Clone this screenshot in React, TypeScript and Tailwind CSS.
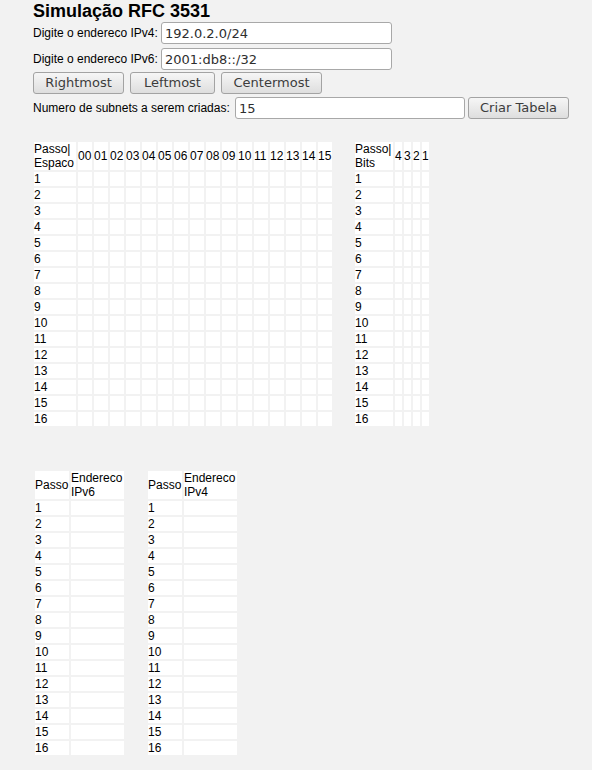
import React from "react";

const cols16 = Array.from({ length: 16 }, (_, i) => String(i).padStart(2, "0"));
const bits = ["4", "3", "2", "1"];
const rows = Array.from({ length: 16 }, (_, i) => String(i + 1));

function Btn({ label, w }: { label: string; w: string }) {
  return (
    <button
      className={`${w} h-[22px] rounded-[3px] border border-[#a3a3a3] bg-gradient-to-b from-[#f6f6f6] to-[#dedede] text-[13px] leading-[20px] text-[#3c3c3c] font-['DejaVu_Sans',sans-serif] text-center`}
    >
      {label}
    </button>
  );
}

function Field({ value, w }: { value: string; w: string }) {
  return (
    <input
      readOnly
      value={value}
      className={`${w} h-[22px] rounded-[3px] border border-[#a8a8a8] bg-white px-[3px] text-[13px] text-[#2e2e2e] font-['DejaVu_Sans',sans-serif] outline-none`}
    />
  );
}

export default function App() {
  return (
    <div className="min-h-[770px] w-full bg-[#f2f2f2] pl-[33px] text-black font-['Liberation_Sans',Arial,sans-serif]">
      <div className="h-[22px] pt-[1px] text-[18px] font-bold leading-[21px]">Simulação RFC 3531</div>

      <div className="flex items-center h-[22px] text-[12px]">
        <span className="w-[128px] whitespace-nowrap">Digite o endereco IPv4:</span>
        <Field value="192.0.2.0/24" w="w-[231px]" />
      </div>
      <div className="flex items-center h-[22px] mt-[4px] text-[12px]">
        <span className="w-[128px] whitespace-nowrap">Digite o endereco IPv6:</span>
        <Field value="2001:db8::/32" w="w-[231px]" />
      </div>
      <div className="flex items-center h-[22px] mt-[2px] gap-[6px]">
        <Btn label="Rightmost" w="w-[91px]" />
        <Btn label="Leftmost" w="w-[85px]" />
        <Btn label="Centermost" w="w-[101px]" />
      </div>
      <div className="flex items-center h-[22px] mt-[3px] text-[12px]">
        <span className="w-[202px] whitespace-nowrap">Numero de subnets a serem criadas:</span>
        <Field value="15" w="w-[230px]" />
        <div className="ml-[3px]">
          <Btn label="Criar Tabela" w="w-[101px]" />
        </div>
      </div>

      <div className="flex items-start gap-[19px] mt-[21px] -ml-[1px] text-[12px] leading-[14px]">
        <table className="border-separate border-spacing-[2px]">
          <thead>
            <tr>
              <td className="bg-white p-0 w-[42px] min-w-[42px] h-[28px] align-middle whitespace-nowrap">
                Passo|
                <br />
                Espaco
              </td>
              {cols16.map((c) => (
                <td key={c} className="bg-white p-0 w-[14px] min-w-[14px] align-middle whitespace-nowrap">
                  {c}
                </td>
              ))}
            </tr>
          </thead>
          <tbody>
            {rows.map((r) => (
              <tr key={r}>
                <td className="bg-white p-0 h-[14px]">{r}</td>
                {cols16.map((c) => (
                  <td key={c} className="bg-white p-0" />
                ))}
              </tr>
            ))}
          </tbody>
        </table>

        <table className="border-separate border-spacing-[2px]">
          <thead>
            <tr>
              <td className="bg-white p-0 w-[38px] min-w-[38px] h-[28px] align-middle whitespace-nowrap">
                Passo|
                <br />
                Bits
              </td>
              {bits.map((b) => (
                <td key={b} className="bg-white p-0 w-[7px] min-w-[7px] align-middle">
                  {b}
                </td>
              ))}
            </tr>
          </thead>
          <tbody>
            {rows.map((r) => (
              <tr key={r}>
                <td className="bg-white p-0 h-[14px]">{r}</td>
                {bits.map((b) => (
                  <td key={b} className="bg-white p-0" />
                ))}
              </tr>
            ))}
          </tbody>
        </table>
      </div>

      <div className="flex items-start gap-[20px] mt-[41px] text-[12px] leading-[14px]">
        {["IPv6", "IPv4"].map((v) => (
          <table key={v} className="border-separate border-spacing-[2px]">
            <thead>
              <tr>
                <td className="bg-white p-0 w-[34px] min-w-[34px] h-[28px] align-middle">Passo</td>
                <td className="bg-white p-0 w-[53px] min-w-[53px] align-middle whitespace-nowrap">
                  Endereco
                  <br />
                  {v}
                </td>
              </tr>
            </thead>
            <tbody>
              {rows.map((r) => (
                <tr key={r}>
                  <td className="bg-white p-0 h-[14px]">{r}</td>
                  <td className="bg-white p-0" />
                </tr>
              ))}
            </tbody>
          </table>
        ))}
      </div>
    </div>
  );
}
